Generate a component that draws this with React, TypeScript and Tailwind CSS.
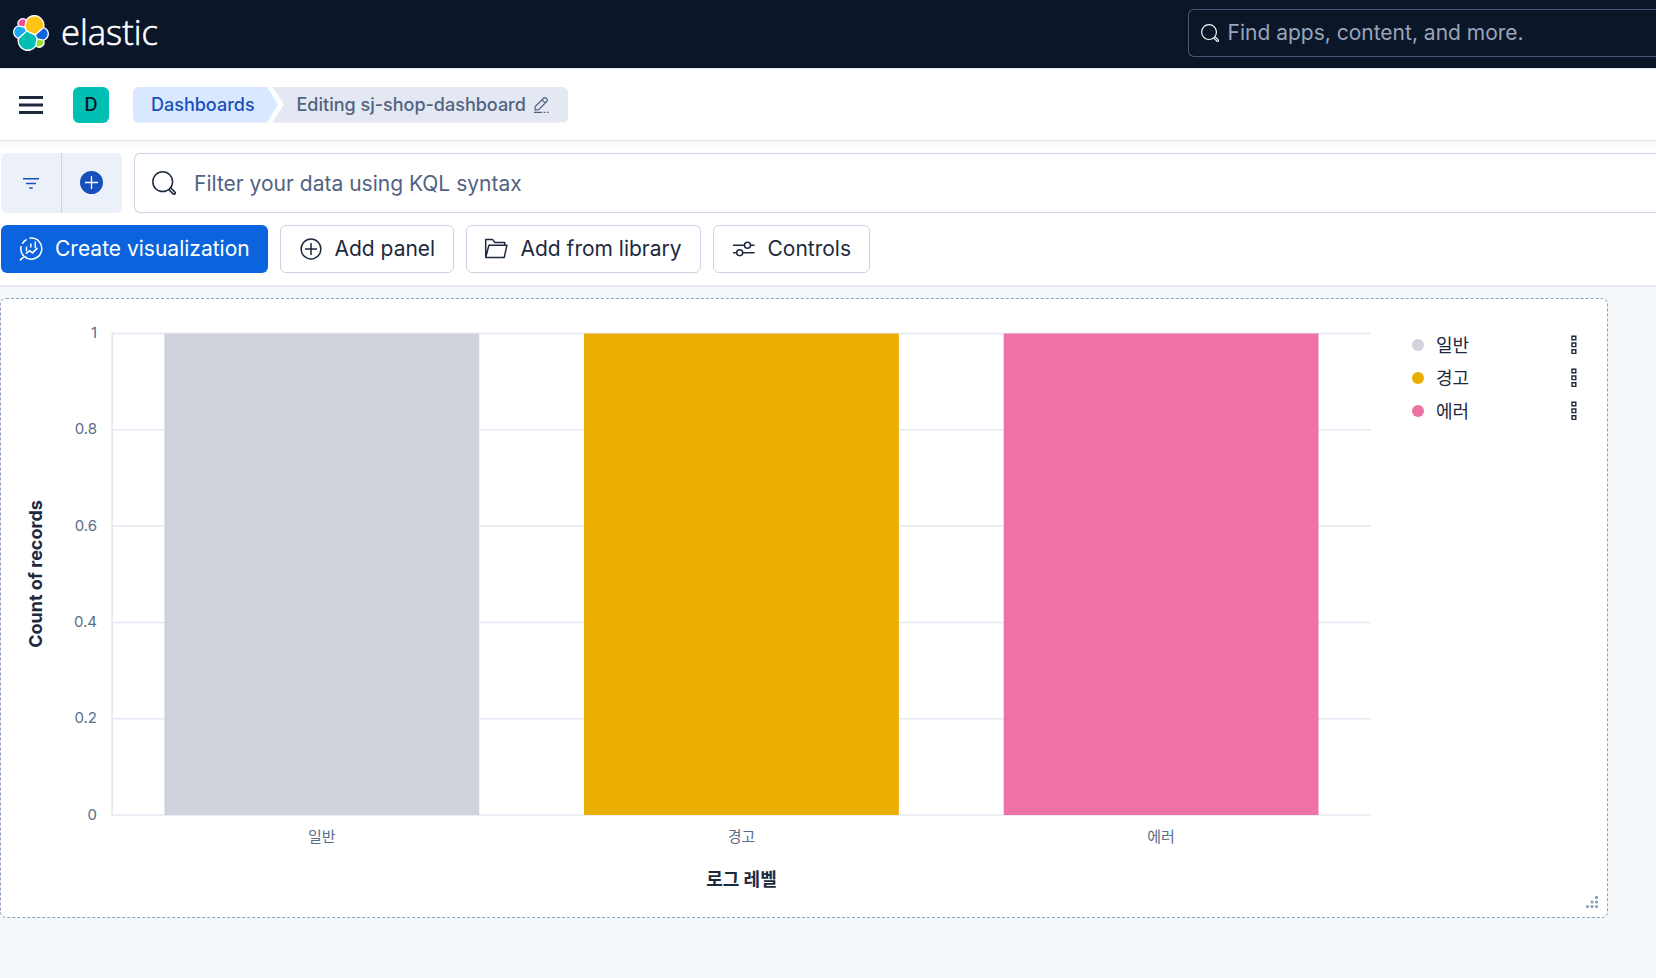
import type { ReactNode } from "react"

const levels = [
  { name: "일반", color: "#d0d3dc" },
  { name: "경고", color: "#eaae01" },
  { name: "에러", color: "#ef72a6" },
]

const ticks = [
  { label: "1", y: 333.5, textY: 338 },
  { label: "0.8", y: 429.7, textY: 434 },
  { label: "0.6", y: 526, textY: 531 },
  { label: "0.4", y: 622.4, textY: 627 },
  { label: "0.2", y: 718.7, textY: 723 },
  { label: "0", y: 815, textY: 820 },
]

function ElasticLogo() {
  return (
    <svg className="size-9" viewBox="0 0 32 32">
      <path
        fill="#fff"
        d="M32 16.77a6.334 6.334 0 00-1.14-3.63 6.269 6.269 0 00-3.02-2.298 9.086 9.086 0 00-.873-5.965A9.05 9.05 0 0022.56.746a9.007 9.007 0 00-5.994-.419 9.037 9.037 0 00-4.93 3.446 4.789 4.789 0 00-5.78-.07A4.833 4.833 0 004.198 9.29a6.384 6.384 0 00-3.035 2.314A6.421 6.421 0 000 15.242a6.344 6.344 0 001.145 3.649 6.279 6.279 0 003.038 2.3 9.184 9.184 0 00-.16 1.7 9.023 9.023 0 001.735 5.324 8.99 8.99 0 004.54 3.276 8.965 8.965 0 005.594-.018 8.991 8.991 0 004.52-3.306 4.789 4.789 0 005.771.077 4.835 4.835 0 001.665-5.585 6.392 6.392 0 003.013-2.313A6.428 6.428 0 0032 16.77"
      />
      <path
        fill="#fec514"
        d="M12.58 13.787l7.002 3.211 7.066-6.213a7.849 7.849 0 00.152-1.557c0-1.692-.533-3.34-1.526-4.704A7.978 7.978 0 0021.283 1.63a7.957 7.957 0 00-4.943.047 7.98 7.98 0 00-3.936 2.995L11.23 10.8l1.35 2.988"
      />
      <path
        fill="#00bfb3"
        d="M5.333 21.228a7.964 7.964 0 001.405 6.211 7.94 7.94 0 004.004 2.904 7.922 7.922 0 004.94-.06 7.943 7.943 0 003.93-3.01l1.166-6.102-1.556-2.985-7.03-3.211-6.859 6.253"
      />
      <path
        fill="#f04e98"
        d="M5.288 9.067l4.8 1.137L11.14 4.73a3.784 3.784 0 00-4.538-.024 3.8 3.8 0 00-1.314 4.36"
      />
      <path
        fill="#1ba9f5"
        d="M4.872 10.214a5.295 5.295 0 00-2.595 1.882 5.324 5.324 0 00-.142 6.124 5.287 5.287 0 002.505 1.999l6.733-6.101-1.235-2.65-5.266-1.254z"
      />
      <path
        fill="#9adc30"
        d="M20.873 27.277a3.736 3.736 0 002.285.785 3.783 3.783 0 003.101-1.63 3.812 3.812 0 00.451-3.484l-4.8-1.125-1.037 5.454z"
      />
      <path
        fill="#0b64dd"
        d="M21.848 20.563l5.28 1.238a5.34 5.34 0 002.621-1.938 5.37 5.37 0 001.013-3.106 5.31 5.31 0 00-.936-3.01 5.275 5.275 0 00-2.475-1.944l-6.904 6.07 1.401 2.69z"
      />
    </svg>
  )
}

function SearchIcon({ className }: { className: string }) {
  return (
    <svg
      className={className}
      viewBox="0 0 24 24"
      fill="none"
      stroke="currentColor"
      strokeWidth="1.5"
    >
      <circle cx="10.7" cy="10.7" r="9.9" />
      <path
        strokeLinejoin="round"
        d="M16.8 18.6l4.3 4.3a1.25 1.25 0 0 0 1.8-1.8l-4.3-4.3"
      />
    </svg>
  )
}

function ToolbarButton({
  className,
  icon,
  children,
}: {
  className: string
  icon: ReactNode
  children: ReactNode
}) {
  return (
    <button
      className={`flex h-12 items-center rounded-md text-[21px] ${className}`}
    >
      {icon}
      <span className="whitespace-nowrap">{children}</span>
    </button>
  )
}

function Chart() {
  return (
    <svg
      className="block h-[618px] w-[1400px] shrink-0"
      viewBox="1 299 1400 618"
    >
      {ticks.map((tick) => (
        <g key={tick.label}>
          <path d={`M112 ${tick.y}H1371`} stroke="#e3e8f2" strokeWidth="1.5" />
          <text
            x="97"
            y={tick.textY}
            textAnchor="end"
            fontSize="15"
            fill="#5a6d8c"
          >
            {tick.label}
          </text>
        </g>
      ))}
      <path d="M112.2 333V816" stroke="#e3e8f2" strokeWidth="1.5" />
      {levels.map((level, i) => (
        <g key={level.name}>
          <rect
            x={164.4 + i * 419.65}
            y="333.5"
            width="314.8"
            height="481.5"
            fill={level.color}
          />
          <text
            x={321.8 + i * 419.65}
            y="842"
            textAnchor="middle"
            fontSize="15"
            fill="#5a6d8c"
          >
            {level.name}
          </text>
        </g>
      ))}
      <text
        transform="translate(42 574) rotate(-90)"
        textAnchor="middle"
        fontSize="18"
        fontWeight="700"
        fill="#1d2a3e"
      >
        Count of records
      </text>
      <text
        x="741.5"
        y="886"
        textAnchor="middle"
        fontSize="18"
        fontWeight="700"
        fill="#1d2a3e"
      >
        로그 레벨
      </text>
    </svg>
  )
}

export default function App() {
  return (
    <div className="flex h-[978px] w-[1656px] flex-col overflow-hidden bg-[#f6f9fc] font-['Inter','Noto_Sans_CJK_KR',sans-serif] text-[#1d2a3e]">
      <header className="flex h-[68px] shrink-0 items-center justify-between bg-[#0b1628] pl-[13px]">
        <div className="flex items-center gap-3 pb-0.5">
          <ElasticLogo />
          <svg className="h-12 w-[110px] overflow-visible" viewBox="0 0 110 48">
            <text
              x="0"
              y="36"
              fill="#fff"
              stroke="#fff"
              strokeWidth="0.6"
              fontSize="35"
              fontWeight="300"
              textLength="97"
              lengthAdjust="spacingAndGlyphs"
              fontFamily="Open Sans, sans-serif"
            >
              elastic
            </text>
          </svg>
        </div>
        <div className="mb-0.5 flex h-12 w-[468px] items-center gap-[8.5px] rounded-l-md border border-r-0 border-[#465879] pl-3 text-[21px] text-[#98a5ba]">
          <SearchIcon className="size-[18px] text-white" />
          Find apps, content, and more.
        </div>
      </header>

      <nav className="relative z-10 flex h-[73px] shrink-0 items-center border-y border-[#e3e8f2] bg-white pl-[19px] text-[18px] font-medium shadow-[0_2px_4px_rgba(40,50,70,0.07)]">
        <svg className="h-[18px] w-6" viewBox="0 0 24 18" fill="#1d2a3e">
          <path d="M0 0h24v3H0zM0 7.5h24v3H0zM0 15h24v3H0z" />
        </svg>
        <div className="ml-[30px] flex size-9 items-center justify-center rounded-md bg-[#00bfb3] text-[#07101f]">
          D
        </div>
        <div className="ml-6 flex h-9 w-[145px] items-center rounded-l-md bg-[#d9e8ff] pl-[18px] text-[#1750ba] [clip-path:polygon(0_0,134px_0,100%_50%,134px_100%,0_100%)]">
          Dashboards
        </div>
        <div className="-ml-[6px] flex h-9 w-[296px] items-center gap-2 rounded-r-md bg-[#e3e8f2] pl-[24.5px] text-[#516381] [clip-path:polygon(0_0,100%_0,100%_100%,0_100%,12px_50%)]">
          Editing sj-shop-dashboard
          <svg
            className="h-4 w-[15px]"
            viewBox="0 0 15 16"
            fill="none"
            stroke="currentColor"
            strokeWidth="1.2"
          >
            <path d="M1.2 13V9.6L9.8 1a1.4 1.4 0 0 1 2 0l1.2 1.2a1.4 1.4 0 0 1 0 2L4.6 12.6zM8 2.8L11.2 6" />
            <path d="M0 15.4h8M9.5 15.4h2M13 15.4h1.5" />
          </svg>
        </div>
      </nav>

      <section className="shrink-0 border-b-2 border-[#e3e8f2] bg-white pb-3 pl-px pt-3">
        <div className="flex gap-3">
          <div className="flex h-[60px] w-[121px] rounded-md bg-[#ecf1f9] text-[#1750ba]">
            <div className="flex w-[61px] items-center justify-center border-r border-[#cad3e2]">
              <svg
                className="h-3 w-4"
                viewBox="0 0 16 12"
                stroke="currentColor"
                strokeWidth="1.5"
              >
                <path d="M0 1.8h16M3 6.5h10M6.3 11.1h3.4" />
              </svg>
            </div>
            <div className="flex flex-1 items-center pb-0.5 pl-[18px]">
              <svg className="size-[23px]" viewBox="0 0 23 23">
                <circle cx="11.5" cy="11.5" r="11.5" fill="#1750ba" />
                <path
                  d="M11.5 5v13M5 11.5h13"
                  stroke="#fff"
                  strokeWidth="1.3"
                />
              </svg>
            </div>
          </div>
          <div className="flex h-[60px] flex-1 items-center gap-[18px] rounded-l-md border-[1.5px] border-r-0 border-[#cad3e2] pl-[17px] text-[21px] text-[#516381]">
            <SearchIcon className="size-6 text-[#1d2a3e]" />
            <span className="pt-0.5">Filter your data using KQL syntax</span>
          </div>
        </div>

        <div className="mt-3 flex gap-3">
          <ToolbarButton
            className="w-[267px] gap-3 bg-[#0b64dd] pl-[18px] text-white"
            icon={
              <svg
                className="size-6"
                viewBox="0 0 24 24"
                fill="none"
                stroke="currentColor"
                strokeWidth="1.5"
              >
                <path d="M10.4 1.3A10.5 10.5 0 1 1 5.2 19.4M5.2 19.4L.9 23.4M5.2 19.4A10.4 10.4 0 0 1 2.2 9M3.2 6.9A10 10 0 0 1 7.6 2.5" />
                <path d="M7.5 14.2V9.6M11.8 10.6V6.6M16.3 11V4.6M6.8 16.6l3.9-3 2.8 2.3 5-5" />
              </svg>
            }
          >
            Create visualization
          </ToolbarButton>
          <ToolbarButton
            className="w-[174px] gap-[12.5px] border border-[#cad3e2] pl-[17px]"
            icon={
              <svg
                className="size-6"
                viewBox="0 0 24 24"
                fill="none"
                stroke="currentColor"
                strokeWidth="1.5"
              >
                <circle cx="13" cy="12" r="9.9" />
                <path d="M13 6v12M7 12h12" />
              </svg>
            }
          >
            Add panel
          </ToolbarButton>
          <ToolbarButton
            className="w-[235px] gap-[12.5px] border border-[#cad3e2] pl-[17px]"
            icon={
              <svg
                className="size-6"
                viewBox="0 0 24 24"
                fill="none"
                stroke="currentColor"
                strokeWidth="1.5"
                strokeLinejoin="round"
              >
                <path d="M1.7 20.5V2.6h7l2.3 2.9h9.7V8.3M1.7 20.5L4.9 8.3h18L20.2 20.5z" />
              </svg>
            }
          >
            Add from library
          </ToolbarButton>
          <ToolbarButton
            className="w-[157px] gap-[12.5px] border border-[#cad3e2] pl-[17px]"
            icon={
              <svg
                className="size-6"
                viewBox="0 0 24 24"
                fill="none"
                stroke="currentColor"
                strokeWidth="1.5"
              >
                <circle cx="16.5" cy="8.2" r="3" />
                <circle cx="8.7" cy="15.7" r="3" />
                <path d="M2 8.2h11.5M19.5 8.2h4M2 15.7h3.7M11.7 15.7h11.8" />
              </svg>
            }
          >
            Controls
          </ToolbarButton>
        </div>
      </section>

      <main className="pt-[11px]">
        <div className="relative flex h-[620px] w-[1608px] rounded-md border border-dashed border-[#8e9fbc] bg-white">
          <Chart />
          <ul className="w-[176px] pl-[11px] pt-[29px] text-[18px]">
            {levels.map((level) => (
              <li key={level.name} className="flex h-[33px] items-center">
                <span
                  className="size-3 rounded-full"
                  style={{ backgroundColor: level.color }}
                />
                <span className="ml-3 flex-1 pt-0.5">{level.name}</span>
                <svg
                  className="h-[19px] w-[6px]"
                  viewBox="0 0 6 19"
                  fill="none"
                  stroke="#1d2a3e"
                  strokeWidth="1.4"
                >
                  <path d="M1 1.2h3.8v3.6H1zM1 8h3.8v3.6H1zM1 14.8h3.8v3.6H1z" />
                </svg>
              </li>
            ))}
          </ul>
          <svg
            className="absolute bottom-[9px] right-[9px] size-3"
            viewBox="0 0 12 12"
            fill="#8e9fbc"
          >
            <circle cx="10.5" cy="1.5" r="1.6" />
            <circle cx="6" cy="6" r="1.6" />
            <circle cx="10.5" cy="6" r="1.6" />
            <circle cx="1.5" cy="10.5" r="1.6" />
            <circle cx="6" cy="10.5" r="1.6" />
            <circle cx="10.5" cy="10.5" r="1.6" />
          </svg>
        </div>
      </main>
    </div>
  )
}
